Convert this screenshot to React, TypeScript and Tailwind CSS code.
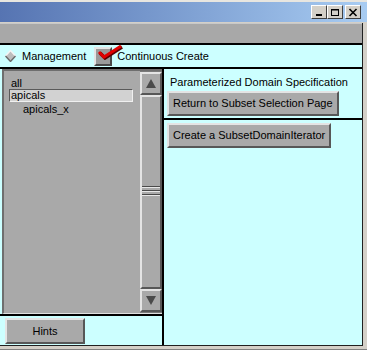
import React from 'react'

const raised =
  'border-2 border-t-[#e4e4e4] border-l-[#e4e4e4] border-r-[#575757] border-b-[#575757] bg-[#a9a9a9]'

function TitleButton({ kind }: { kind: 'min' | 'max' | 'close' }) {
  return (
    <div className="w-[16px] h-[14px] bg-[#d4d0c8] border border-t-white border-l-white border-r-[#404040] border-b-[#404040] flex items-center justify-center">
      <svg width="10" height="9" viewBox="0 0 10 9">
        {kind === 'min' && <rect x="2" y="6" width="6" height="2" fill="#000" />}
        {kind === 'max' && (
          <g fill="none" stroke="#000">
            <rect x="1.5" y="1.5" width="7" height="6" />
            <line x1="1" y1="2" x2="9" y2="2" />
          </g>
        )}
        {kind === 'close' && (
          <g stroke="#000" strokeWidth="1.6">
            <line x1="1.5" y1="1" x2="8.5" y2="8" />
            <line x1="8.5" y1="1" x2="1.5" y2="8" />
          </g>
        )}
      </svg>
    </div>
  )
}

function ScrollArrow({ up }: { up: boolean }) {
  return (
    <div className={`h-[23px] ${raised} flex items-center justify-center`}>
      <svg width="10" height="9" viewBox="0 0 10 9">
        <polygon points={up ? '5,0 10,9 0,9' : '0,0 10,0 5,9'} fill="#4a4a4a" />
      </svg>
    </div>
  )
}

export default function App() {
  return (
    <div
      className="w-[367px] h-[350px] bg-[#d4d0c8] flex flex-col overflow-hidden text-[11px] text-black leading-none"
      style={{ fontFamily: '"Liberation Sans", Arial, sans-serif' }}
    >
      {/* title bar */}
      <div className="h-[2px] bg-[#e8e6e0]" />
      <div className="h-[20px] bg-gradient-to-r from-[#5674b2] to-[#a8ccf2] flex items-center justify-end gap-0 pr-[6px]">
        <TitleButton kind="min" />
        <TitleButton kind="max" />
        <div className="w-[2px]" />
        <TitleButton kind="close" />
      </div>
      <div className="h-[1px] bg-[#d4d0c8]" />

      <div className="flex flex-1">
        <div className="w-[363px] flex flex-col border-r border-b border-[#202020]">
          {/* gray band */}
          <div className="h-[20px] bg-[#a8a8a8] border-t border-[#c8c8c8]" />
          <div className="h-[2px] bg-black" />

          {/* options row */}
          <div className="h-[22px] bg-[#ccffff] flex items-center pl-[5px]">
            <svg width="11" height="12" viewBox="0 0 11 12">
              <polygon points="5.5,0.5 10.5,6 5.5,11.5 0.5,6" fill="#bdbdbd" />
              <polyline points="0.5,6 5.5,0.5 10.5,6" fill="none" stroke="#f4f4f4" strokeWidth="1.4" />
              <polyline points="0.5,6 5.5,11.5 10.5,6" fill="none" stroke="#6a6a6a" strokeWidth="1.4" />
            </svg>
            <span className="ml-[6px]">Management</span>
            <div className="relative ml-[8px] w-[18px] h-[19px]">
              <div className="w-[18px] h-[19px] border-2 border-t-[#e4e4e4] border-l-[#e4e4e4] border-r-[#4a4a4a] border-b-[#4a4a4a] bg-[#9a9a9a]" />
              <svg className="absolute left-[3px] top-[-3px]" width="26" height="16" viewBox="0 0 26 16">
                <polyline points="2,8 7,13 24,2" fill="none" stroke="#5a0000" strokeWidth="3.5" transform="translate(1,1)" />
                <polyline points="2,8 7,13 24,2" fill="none" stroke="#e00000" strokeWidth="3" />
              </svg>
            </div>
            <span className="ml-[5px]">Continuous Create</span>
          </div>
          <div className="h-[2px] bg-black" />

          {/* main split */}
          <div className="flex flex-1">
            <div className="w-[162px] flex flex-col bg-[#ccffff]">
              <div className="h-[245px] ml-[2px] flex border-t-2 border-l-2 border-[#6e6e6e] border-b border-b-[#e0e0e0] bg-[#a9a9a9]">
                <div className="flex-1 pt-[6px] pl-[5px] pr-[7px] flex flex-col">
                  <div className="h-[12px] pl-[2px] flex items-center">all</div>
                  <div className="h-[13px] pl-[1px] flex items-center bg-[#d2d2d2] border-t border-l border-[#5a5a5a] border-b-[#f0f0f0] border-r-[#f0f0f0] border">
                    apicals
                  </div>
                  <div className="h-[12px] pl-[14px] flex items-center mt-[1px]">apicals_x</div>
                </div>
                <div className="w-[22px] flex flex-col bg-[#7a7a7a] py-[1px]">
                  <ScrollArrow up />
                  <div className={`flex-1 ${raised} flex items-center justify-center`}>
                    <div className="w-[18px] flex flex-col gap-[2px] -mt-[2px]">
                      <div className="h-[2px] border-t border-[#4a4a4a] border-b border-b-[#e8e8e8]" />
                      <div className="h-[2px] border-t border-[#4a4a4a] border-b border-b-[#e8e8e8]" />
                      <div className="h-[2px] border-t border-[#4a4a4a] border-b border-b-[#e8e8e8]" />
                    </div>
                  </div>
                  <ScrollArrow up={false} />
                </div>
              </div>
              <div className="h-[2px] bg-black" />
              <div className="flex-1 flex items-start pt-[2px] pl-[5px]">
                <div className={`w-[80px] h-[26px] ${raised} flex items-center justify-center`}>Hints</div>
              </div>
            </div>
            <div className="w-[2px] bg-black" />
            <div className="flex-1 bg-[#ccffff] flex flex-col">
              <div className="pl-[6px] pt-[8px] h-[22px]">Parameterized Domain Specification</div>
              <div className="pl-[3px]">
                <div className={`w-[172px] h-[25px] ${raised} flex items-center pl-[4px]`}>
                  Return to Subset Selection Page
                </div>
              </div>
              <div className="h-[2px] bg-black mt-[2px]" />
              <div className="pl-[3px] pt-[3px]">
                <div className={`w-[164px] h-[25px] ${raised} flex items-center pl-[4px]`}>
                  Create a SubsetDomainIterator
                </div>
              </div>
            </div>
          </div>
        </div>
        <div className="flex-1" />
      </div>
      <div className="h-[4px] border-b border-[#808080]" />
    </div>
  )
}
